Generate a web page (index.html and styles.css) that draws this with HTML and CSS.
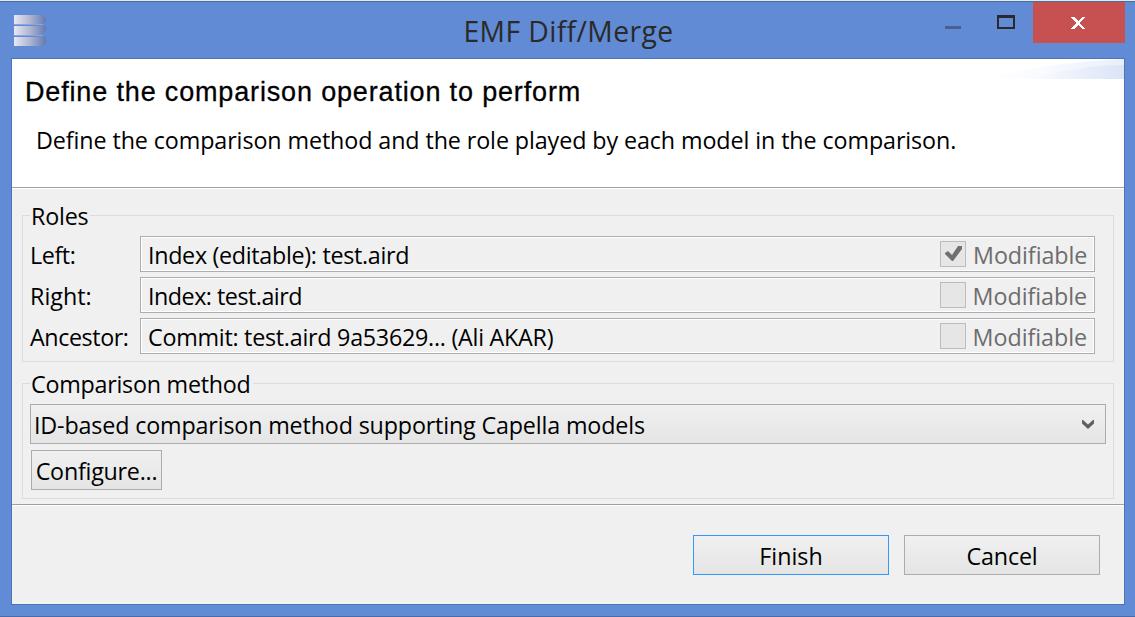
FILE: index.html
```html
<!DOCTYPE html>
<html lang="en">
<head>
<meta charset="utf-8">
<title>EMF Diff/Merge</title>
<link rel="stylesheet" href="styles.css">
</head>
<body>
<div class="window">
  <header class="titlebar">
    <svg class="app-icon" width="32" height="31" viewBox="0 0 32 31">
      <defs><linearGradient id="metal" gradientUnits="userSpaceOnUse" x1="0" x2="32" y1="0" y2="0"><stop offset="0" stop-color="#e8e8f4"/><stop offset=".5" stop-color="#afb5d3"/><stop offset="1" stop-color="#6379b1"/></linearGradient></defs>
      <g fill="url(#metal)">
        <path d="M0 0H29L32 3V7L29 9H0Z"/><path d="M0 11H32V15L29 20H0Z"/><path d="M0 22H32V28L29 31H0Z"/>
      </g>
      <path d="M0 9.5H29M0 20.5H29" stroke="#8ca6d8"/>
    </svg>
    <h1 class="window-title"><span class="t-title">EMF Diff/Merge</span></h1>
    <div class="controls">
      <svg class="minimize" width="16" height="3"><path d="M0 0H16V3H0Z" fill="#485f8f"/></svg>
      <svg class="maximize" width="18" height="14"><path fill="#2a2a2a" fill-rule="evenodd" d="M0 0H18V14H0ZM2 3V12H16V3Z"/></svg>
      <button class="close" aria-label="Close"><svg width="14" height="12" viewBox="0 0 14 12" shape-rendering="crispEdges"><path d="M0 0H3L7 4L11 0H14L8.5 6L14 12H11L7 8L3 12H0L5.5 6Z" fill="#fff"/></svg></button>
    </div>
  </header>
  <main class="client">
    <section class="banner">
      <div class="banner-text">
        <h2 class="heading"><span class="t-heading">Define the comparison operation to perform</span></h2>
        <p class="description"><span class="t-desc">Define the comparison method and the role played by each model in the comparison.</span></p>
      </div>
      <svg class="swoosh" width="140" height="20" viewBox="0 0 140 20">
        <defs>
          <linearGradient id="haze"><stop offset="0" stop-color="#fff"/><stop offset=".45" stop-color="#f8faff"/><stop offset="1" stop-color="#e9effa"/></linearGradient>
          <linearGradient id="glow"><stop offset="0" stop-color="#fafbff"/><stop offset="1" stop-color="#dbe4f6"/></linearGradient>
        </defs>
        <path d="M0 20C35 10 90 2 140 0V20Z" fill="url(#haze)"/>
        <path d="M48 20C75 11 110 6 140 6V20Z" fill="url(#glow)"/>
      </svg>
    </section>
    <div class="content">
      <section class="group roles">
        <h3 class="legend"><span class="t-roles">Roles</span></h3>
        <div class="role-list">
          <div class="role"><span class="role-label"><span class="t-left">Left:</span></span><div class="field"><span class="t-index-edit">Index (editable): test.aird</span><span class="modifiable"><span class="box"><svg width="17" height="15" viewBox="0 0 17 15"><path d="M0 7L3 5L7 9L13 0H17V3L8 15H7L0 8Z" fill="#707070"/></svg></span><span class="t-mod">Modifiable</span></span></div></div>
          <div class="role"><span class="role-label"><span class="t-right">Right:</span></span><div class="field"><span class="t-index">Index: test.aird</span><span class="modifiable"><span class="box"></span><span class="t-mod">Modifiable</span></span></div></div>
          <div class="role"><span class="role-label"><span class="t-ancestor">Ancestor:</span></span><div class="field"><span class="t-commit">Commit: test.aird 9a53629... (Ali AKAR)</span><span class="modifiable"><span class="box"></span><span class="t-mod">Modifiable</span></span></div></div>
        </div>
      </section>
      <section class="group method">
        <h3 class="legend"><span class="t-method">Comparison method</span></h3>
        <div class="combo"><span class="t-combo">ID-based comparison method supporting Capella models</span><svg width="12" height="9" viewBox="0 0 12 9"><path d="M0 0H1L6 4.5L11 0H12V3.5L6 9L0 3.5Z" fill="#606060"/></svg></div>
        <button class="button configure"><span class="t-configure">Configure...</span></button>
      </section>
    </div>
    <footer class="actions">
      <button class="button wide default"><span class="t-finish">Finish</span></button>
      <button class="button wide"><span class="t-cancel">Cancel</span></button>
    </footer>
  </main>
</div>
</body>
</html>
```
FILE: styles.css
```css
* { box-sizing: border-box; }
body { margin: 0; font: 23.3px/34px "Open Sans", "Noto Sans", sans-serif; color: #000; }
h1, h2, h3, p { margin: 0; font-weight: 400; font-size: inherit; }
span { white-space: nowrap; }
svg { display: block; flex: none; }
.window { width: 1135px; height: 617px; display: flex; flex-direction: column; background: #618bd5; border-top: 1px solid #e6e9ed; border-bottom: 1px solid #496ca8; }
.titlebar { height: 57px; display: grid; grid-template-columns: 200px 1fr 200px; border-top: 1px solid #466ca6; }
.app-icon { margin: 13px 0 0 14px; }
.window-title { font-size: 28.3px; line-height: 40px; padding: 9px 0 0 2px; text-align: center; color: #2a2a2a; }
.controls { display: flex; align-items: flex-start; justify-content: flex-end; padding-right: 10px; }
.minimize { margin: 24px 36px 0 0; }
.maximize { margin: 13px 18px 0 0; }
.close { width: 92px; height: 41px; padding: 0 2px 0 0; border: 0; background: #c75050; display: flex; align-items: center; justify-content: center; }
.client { width: 1114px; height: 547px; margin-left: 11px; border: 1px solid #4d74b8; background: #f0f0f0; display: flex; flex-direction: column; }
.banner { height: 130px; background: #fff; border-bottom: 1px solid #fff; box-shadow: inset 0 -1px #a0a0a0; display: flex; justify-content: space-between; }
.banner-text { padding: 15px 0 0 13px; width: 960px; }
.heading { font: 27px/36px "Liberation Sans", Arial, sans-serif; -webkit-text-stroke: .3px #000; }
.description { margin-top: 13px; padding-left: 11px; }
.content { height: 315px; padding: 26px 10px 0; }
.group { border: 1px solid #dcdcdc; display: flex; flex-direction: column; align-items: flex-start; }
.roles { height: 147px; }
.method { height: 116px; margin-top: 21px; padding-left: 7px; }
.legend { height: 34px; margin-top: -17px; background: #f0f0f0; padding: 0 2px 0 1px; }
.roles .legend { margin-left: 7px; }
.role-list { display: grid; gap: 5px; margin: 3px 0 0 7px; }
.role { display: grid; grid-template-columns: 110px 955px; height: 36px; }
.role-label { line-height: 33px; padding-top: 3px; }
.field { height: 36px; line-height: 32px; border: 1px solid #abadb3; box-shadow: inset 0 0 0 1px #fff; padding: 2px 7px 0; display: flex; justify-content: space-between; }
.modifiable { display: flex; color: #6d6d6d; width: 147px; }
.box { width: 26px; height: 26px; margin: 2px 7px 0 0; background: #e6e6e6; border: 1px solid #bcbcbc; padding: 4px; }
.combo { width: 1076px; height: 40px; margin-top: 3px; border: 1px solid #acacac; background: linear-gradient(#f0f0f0, #e5e5e5); display: flex; align-items: center; justify-content: space-between; padding: 1px 11px 0 3px; }
.button { height: 40px; border: 1px solid #acacac; background: linear-gradient(#f0f0f0, #e5e5e5); font: inherit; color: #000; padding: 1px 0 0; text-align: center; }
.configure { width: 131px; margin: 6px 0 0 1px; }
.actions { height: 100px; border-top: 1px solid #a0a0a0; box-shadow: inset 0 1px #fff; display: flex; justify-content: flex-end; gap: 15px; padding: 30px 24px 0 0; }
.wide { width: 196px; }
.default { border-color: #3399ff; }

/* Text tracking */
.t-title { letter-spacing: .4px; }
.t-heading { letter-spacing: .84px; }
.t-desc { letter-spacing: -.1px; }
.t-roles { letter-spacing: -.2px; }
.t-left, .t-ancestor { letter-spacing: -.42px; }
.t-index-edit { letter-spacing: -.31px; }
.t-index { letter-spacing: -.5px; }
.t-commit { letter-spacing: -.26px; }
.t-mod { letter-spacing: -.06px; }
.t-method { letter-spacing: -.25px; }
.t-combo { letter-spacing: -.16px; }
.t-configure { letter-spacing: -.25px; }
.t-cancel { letter-spacing: -.15px; }
```
